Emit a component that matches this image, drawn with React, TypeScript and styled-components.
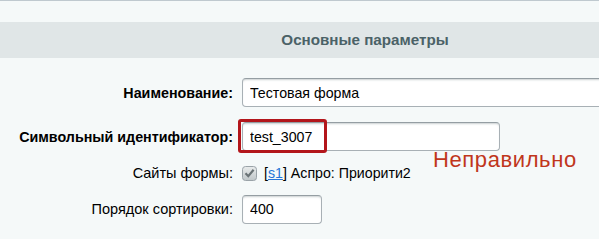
import styled, { createGlobalStyle } from "styled-components";

const GlobalStyle = createGlobalStyle`
  html, body {
    margin: 0;
    padding: 0;
    background: #f5f9f9;
    overflow: hidden;
  }
  body {
    font-family: "Liberation Sans", Arial, sans-serif;
    font-size: 13px;
    color: #000;
  }
`;

function CheckMark() {
  return (
    <svg width="15" height="15" viewBox="0 0 15 15">
      <defs>
        <linearGradient id="cbg" x1="0" y1="0" x2="0" y2="1">
          <stop offset="0" stopColor="#e9ecec" />
          <stop offset="1" stopColor="#bfc6c8" />
        </linearGradient>
      </defs>
      <rect x="0.5" y="0.5" width="14" height="14" rx="3" fill="url(#cbg)" stroke="#9aa3a8" />
      <path d="M3.5 7.3 L6.3 10.2 L11.6 3.8" fill="none" stroke="#6a7376" strokeWidth="2.2" />
    </svg>
  );
}

function App() {
  return (
    <>
      <GlobalStyle />
      <StyledPage>
        <StyledTitle>Основные параметры</StyledTitle>
        <StyledForm>
          <StyledRow $height={45}>
            <StyledLabel $bold>Наименование:</StyledLabel>
            <StyledCell>
              <StyledInput $width={380} defaultValue="Тестовая форма" />
            </StyledCell>
          </StyledRow>
          <StyledRow $height={43}>
            <StyledLabel $bold>Символьный идентификатор:</StyledLabel>
            <StyledCell>
              <StyledMarked>
                <StyledInput $width={258} defaultValue="test_3007" />
                <StyledRedBox />
                <StyledWrong>Неправильно</StyledWrong>
              </StyledMarked>
            </StyledCell>
          </StyledRow>
          <StyledRow $height={30}>
            <StyledLabel>Сайты формы:</StyledLabel>
            <StyledCell>
              <StyledSite>
                <CheckMark />
                <span>
                  [<StyledLink href="#">s1</StyledLink>] Аспро: Приорити2
                </span>
              </StyledSite>
            </StyledCell>
          </StyledRow>
          <StyledRow $height={42}>
            <StyledLabel>Порядок сортировки:</StyledLabel>
            <StyledCell>
              <StyledInput $width={80} defaultValue="400" />
            </StyledCell>
          </StyledRow>
        </StyledForm>
      </StyledPage>
    </>
  );
}

export default App;

const StyledPage = styled.div`
  width: 730px;
  border-top: 1px solid #bfc9cf;
  padding-top: 21px;
`;

const StyledTitle = styled.div`
  height: 36px;
  line-height: 36px;
  background: #e0e6e7;
  color: #4b6267;
  font-size: 15.2px;
  font-weight: bold;
  text-align: center;
`;

const StyledForm = styled.div`
  display: flex;
  flex-direction: column;
  padding-top: 12px;
`;

const StyledRow = styled.div<{ $height: number }>`
  display: grid;
  grid-template-columns: 233px 1fr;
  column-gap: 9px;
  align-items: center;
  height: ${({ $height }) => $height}px;
`;

const StyledLabel = styled.div<{ $bold?: boolean }>`
  text-align: right;
  font-size: ${({ $bold }) => ($bold ? "14.3px" : "14.5px")};
  font-weight: ${({ $bold }) => ($bold ? "bold" : "normal")};
  color: #000;
  white-space: nowrap;
`;

const StyledCell = styled.div`
  display: flex;
  align-items: center;
`;

const StyledInput = styled.input<{ $width: number }>`
  box-sizing: border-box;
  width: ${({ $width }) => $width}px;
  height: 29px;
  padding: 0 7px;
  border: 1px solid #a8b0b5;
  border-top-color: #959ea3;
  border-radius: 4px;
  background: #fff;
  box-shadow: inset 0 2px 2px -1px rgba(180, 188, 191, 0.7);
  font-family: "Liberation Sans", Arial, sans-serif;
  font-size: 14.2px;
  color: #000;
  outline: none;
`;

const StyledMarked = styled.div`
  position: relative;
  display: flex;
`;

const StyledRedBox = styled.div`
  position: absolute;
  left: -4px;
  top: -3px;
  width: 89px;
  height: 34px;
  box-sizing: border-box;
  border: 3px solid #b3161b;
  border-radius: 3px;
`;

const StyledWrong = styled.div`
  position: absolute;
  left: 191px;
  top: 25px;
  font-size: 22px;
  letter-spacing: 0.6px;
  color: #c0361c;
  white-space: nowrap;
`;

const StyledSite = styled.div`
  display: flex;
  align-items: center;
  gap: 7px;
  font-size: 14.2px;
  color: #000;
`;

const StyledLink = styled.a`
  color: #2675d7;
  text-decoration: underline;
`;
